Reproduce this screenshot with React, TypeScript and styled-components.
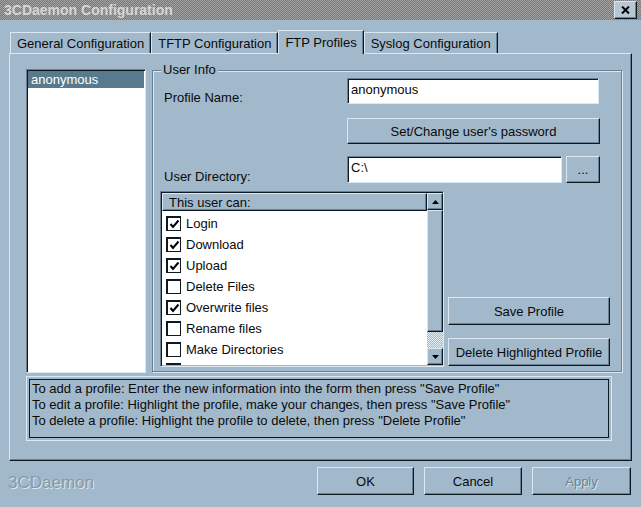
import React from "react";
import styled, { createGlobalStyle, css } from "styled-components";

const C = {
  face: "#a2b9cb",
  light: "#dbe7f1",
  shadow: "#6b8192",
  dark: "#0e1a22",
  sel: "#587a8c",
  text: "#0a0a0a",
};

const Global = createGlobalStyle`
  html, body { margin: 0; padding: 0; background: ${C.face}; }
  body { font-family: "Liberation Sans", Arial, sans-serif; font-size: 13px; color: ${C.text}; }
  * { box-sizing: border-box; }
`;

const raised = css`
  border-style: solid;
  border-width: 1px;
  border-color: ${C.light} ${C.dark} ${C.dark} ${C.light};
  box-shadow: inset -1px -1px 0 ${C.shadow};
`;

const sunken = css`
  border-style: solid;
  border-width: 1px;
  border-color: ${C.shadow} ${C.light} ${C.light} ${C.shadow};
  box-shadow: inset 1px 1px 0 ${C.dark};
`;

const Window = styled.div`
  width: 641px;
  height: 507px;
  background: ${C.face};
  display: flex;
  flex-direction: column;
  overflow: hidden;
`;

const TitleBar = styled.div`
  height: 20px;
  flex: none;
  display: flex;
  align-items: center;
  justify-content: space-between;
  padding: 0 4px 0 4px;
  background-color: #8c8c8c;
  background-image: repeating-conic-gradient(#777777 0 25%, #a4a4a4 0 50%);
  background-size: 2px 2px;
`;

const TitleText = styled.span`
  font-size: 14px;
  font-weight: bold;
  color: #d6d6d6;
`;

const CloseButton = styled.div`
  width: 23px;
  height: 18px;
  background: #b6c8d6;
  ${raised};
  display: flex;
  align-items: center;
  justify-content: center;
`;

const Body = styled.div`
  padding: 10px 9px 0 9px;
`;

const TabRow = styled.div`
  display: flex;
  align-items: flex-end;
  height: 23px;
  margin-left: 1px;
  position: relative;
  z-index: 1;
`;

const Tab = styled.div<{ $active?: boolean }>`
  display: flex;
  align-items: center;
  padding: 0 6px;
  height: ${(p) => (p.$active ? "24px" : "21px")};
  margin-bottom: ${(p) => (p.$active ? "-1px" : "0")};
  background: ${C.face};
  border-top: 1px solid ${C.light};
  border-left: 1px solid ${C.light};
  border-right: 1px solid ${C.dark};
  box-shadow: inset -1px 0 0 ${C.shadow};
  padding-top: ${(p) => (p.$active ? "0" : "1px")};
`;

const Panel = styled.div`
  width: 623px;
  height: 408px;
  border-style: solid;
  border-width: 1px;
  border-color: ${C.light} ${C.dark} ${C.dark} ${C.light};
  box-shadow: inset -1px -1px 0 ${C.shadow};
  padding: 15px 0 0 16px;
`;

const TopRow = styled.div`
  display: flex;
  gap: 6px;
  height: 304px;
`;

const ProfileList = styled.div`
  width: 120px;
  height: 304px;
  background: #ffffff;
  ${sunken};
  padding: 1px 1px 0 1px;
`;

const ListItem = styled.div<{ $selected?: boolean }>`
  height: 17px;
  line-height: 17px;
  padding-left: 3px;
  background: ${(p) => (p.$selected ? C.sel : "transparent")};
  color: ${(p) => (p.$selected ? "#ffffff" : C.text)};
`;

const Group = styled.div`
  position: relative;
  width: 470px;
  height: 302px;
  margin-top: 1px;
  border: 1px solid ${C.shadow};
  box-shadow: inset 1px 1px 0 ${C.light}, 1px 1px 0 ${C.light};
  padding: 4px 0 0 11px;
`;

const Legend = styled.span`
  position: absolute;
  top: -9px;
  left: 8px;
  padding: 0 2px;
  background: ${C.face};
  line-height: 16px;
`;

const FieldRow = styled.div<{ $mt: number }>`
  display: flex;
  align-items: flex-end;
  gap: 4px;
  margin-top: ${(p) => p.$mt}px;
`;

const FieldLabel = styled.span`
  width: 179px;
  line-height: 16px;
  margin-bottom: -2px;
`;

const TextBox = styled.div<{ $w: number; $h: number }>`
  width: ${(p) => p.$w}px;
  height: ${(p) => p.$h}px;
  background: #ffffff;
  ${sunken};
  padding: 0 0 4px 3px;
  display: flex;
  align-items: center;
`;

const Button = styled.div<{ $w: number; $h: number; $disabled?: boolean }>`
  width: ${(p) => p.$w}px;
  height: ${(p) => p.$h}px;
  background: ${C.face};
  ${raised};
  display: flex;
  align-items: center;
  justify-content: center;
  color: ${(p) => (p.$disabled ? C.shadow : C.text)};
  text-shadow: ${(p) => (p.$disabled ? `1px 1px 0 ${C.light}` : "none")};
`;

const IndentedButton = styled(Button)`
  margin-left: 183px;
`;

const ListRow = styled.div`
  display: flex;
  align-items: flex-end;
  gap: 4px;
  margin-top: 8px;
  margin-left: -4px;
`;

const CheckList = styled.div`
  width: 284px;
  height: 176px;
  ${sunken};
  padding: 1px 0 1px 1px;
  display: flex;
`;

const ListMain = styled.div`
  flex: 1;
  display: flex;
  flex-direction: column;
  overflow: hidden;
  background: #ffffff;
`;

const ListHeader = styled.div`
  height: 18px;
  flex: none;
  background: ${C.face};
  ${raised};
  padding-left: 6px;
  display: flex;
  align-items: center;
`;

const Items = styled.div`
  padding: 2px 0 0 4px;
`;

const ItemRow = styled.div`
  height: 21px;
  flex: none;
  display: flex;
  align-items: center;
  gap: 5px;
`;

const CheckBox = styled.div`
  width: 15px;
  height: 15px;
  flex: none;
  background: #ffffff;
  border-style: solid;
  border-color: ${C.dark};
  border-width: 2px 1px 1px 2px;
  display: flex;
  align-items: center;
  justify-content: center;
`;

const ScrollBar = styled.div`
  width: 16px;
  flex: none;
  display: flex;
  flex-direction: column;
  background: ${C.face};
`;

const ArrowButton = styled.div`
  height: 17px;
  flex: none;
  background: ${C.face};
  ${raised};
  display: flex;
  align-items: center;
  justify-content: center;
`;

const Thumb = styled.div`
  height: 122px;
  flex: none;
  background: ${C.face};
  ${raised};
`;

const Track = styled.div`
  flex: 1;
  background-color: #c4d4e0;
  background-image: repeating-conic-gradient(#e4eef5 0 25%, ${C.face} 0 50%);
  background-size: 2px 2px;
`;

const ActionColumn = styled.div`
  display: flex;
  flex-direction: column;
  gap: 13px;
  margin-bottom: 1px;
`;

const InfoBox = styled.div`
  width: 586px;
  height: 65px;
  margin-top: 3px;
  border: 1px solid ${C.light};
  box-shadow: inset 0 0 0 2px ${C.face}, inset 0 0 0 3px ${C.dark};
  padding: 4px 0 0 5px;
  line-height: 16px;
`;

const Footer = styled.div`
  display: flex;
  align-items: center;
  justify-content: space-between;
  padding: 6px 10px 0 8px;
`;

const Brand = styled.span`
  font-size: 17px;
  color: #8699a8;
  text-shadow: 1px 1px 0 #dbe6ee;
  margin-top: 3px;
`;

const ButtonGroup = styled.div`
  display: flex;
  gap: 10px;
`;

const Check = () => (
  <svg width="11" height="11" viewBox="0 0 11 11">
    <polyline points="1.5,5 4,8 9.5,1.5" fill="none" stroke="#000" strokeWidth="2" />
  </svg>
);

const Arrow = ({ down }: { down?: boolean }) => (
  <svg width="7" height="4" viewBox="0 0 7 4">
    <polygon points={down ? "0,0 7,0 3.5,4" : "0,4 7,4 3.5,0"} fill="#000" />
  </svg>
);

const permissions: { label: string; checked: boolean }[] = [
  { label: "Login", checked: true },
  { label: "Download", checked: true },
  { label: "Upload", checked: true },
  { label: "Delete Files", checked: false },
  { label: "Overwrite files", checked: true },
  { label: "Rename files", checked: false },
  { label: "Make Directories", checked: false },
];

export default function App() {
  return (
    <>
      <Global />
      <Window>
        <TitleBar>
          <TitleText>3CDaemon Configuration</TitleText>
          <CloseButton>
            <svg width="9" height="8" viewBox="0 0 9 8">
              <path d="M1 0.5 L8 7.5 M8 0.5 L1 7.5" stroke="#000" strokeWidth="2" />
            </svg>
          </CloseButton>
        </TitleBar>
        <Body>
          <TabRow>
            <Tab>General Configuration</Tab>
            <Tab>TFTP Configuration</Tab>
            <Tab $active>FTP Profiles</Tab>
            <Tab>Syslog Configuration</Tab>
          </TabRow>
          <Panel>
            <TopRow>
              <ProfileList>
                <ListItem $selected>anonymous</ListItem>
              </ProfileList>
              <Group>
                <Legend>User Info</Legend>
                <FieldRow $mt={3}>
                  <FieldLabel>Profile Name:</FieldLabel>
                  <TextBox $w={252} $h={26}>anonymous</TextBox>
                </FieldRow>
                <FieldRow $mt={14}>
                  <IndentedButton $w={253} $h={26}>Set/Change user's password</IndentedButton>
                </FieldRow>
                <FieldRow $mt={12}>
                  <FieldLabel>User Directory:</FieldLabel>
                  <TextBox $w={215} $h={27}>C:\</TextBox>
                  <Button $w={34} $h={27}>...</Button>
                </FieldRow>
                <ListRow>
                  <CheckList>
                    <ListMain>
                      <ListHeader>This user can:</ListHeader>
                      <Items>
                        {permissions.map((p) => (
                          <ItemRow key={p.label}>
                            <CheckBox>{p.checked && <Check />}</CheckBox>
                            <span>{p.label}</span>
                          </ItemRow>
                        ))}
                        <ItemRow>
                          <CheckBox />
                        </ItemRow>
                      </Items>
                    </ListMain>
                    <ScrollBar>
                      <ArrowButton>
                        <Arrow />
                      </ArrowButton>
                      <Thumb />
                      <Track />
                      <ArrowButton>
                        <Arrow down />
                      </ArrowButton>
                    </ScrollBar>
                  </CheckList>
                  <ActionColumn>
                    <Button $w={162} $h={28}>Save Profile</Button>
                    <Button $w={162} $h={28}>Delete Highlighted Profile</Button>
                  </ActionColumn>
                </ListRow>
              </Group>
            </TopRow>
            <InfoBox>
              <div>To add a profile: Enter the new information into the form then press "Save Profile"</div>
              <div>To edit a profile: Highlight the profile, make your changes, then press "Save Profile"</div>
              <div>To delete a profile: Highlight the profile to delete, then press "Delete Profile"</div>
            </InfoBox>
          </Panel>
        </Body>
        <Footer>
          <Brand>3CDaemon</Brand>
          <ButtonGroup>
            <Button $w={97} $h={28}>OK</Button>
            <Button $w={98} $h={28}>Cancel</Button>
            <Button $w={99} $h={28} $disabled>Apply</Button>
          </ButtonGroup>
        </Footer>
      </Window>
    </>
  );
}
